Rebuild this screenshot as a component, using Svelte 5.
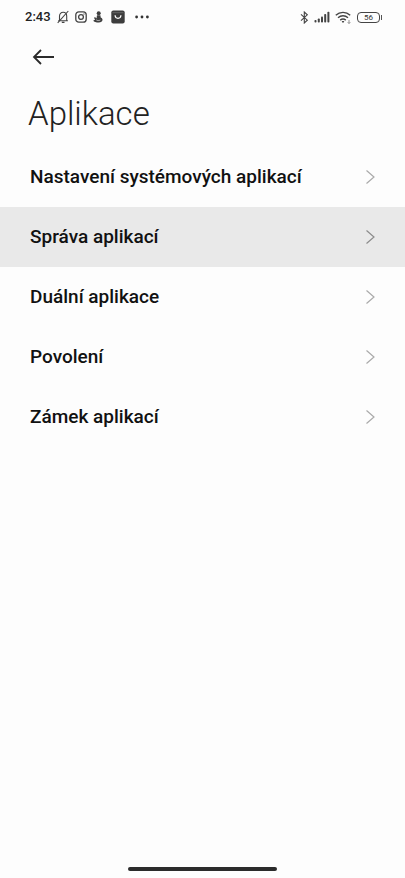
<script lang="ts">
	const items = [
		{ label: "Nastavení systémových aplikací", href: "#system" },
		{ label: "Správa aplikací", href: "#manage", pressed: true },
		{ label: "Duální aplikace", href: "#dual" },
		{ label: "Povolení", href: "#permissions" },
		{ label: "Zámek aplikací", href: "#lock" }
	];
	const battery = 56;
</script>

<div class="screen">
	<div class="status-bar">
		<div class="group">
			<span class="time">2:43</span>
			<svg width="12" height="14" viewBox="0 0 12 14" fill="none" stroke="#444" stroke-width="1.1">
				<path d="M1.2 10.7h9.7M2.5 10.5V6.2C2.5 3.8 4 2.2 6.2 2.2S9.7 3.8 9.7 6.2v4.3M4.8 12.4h2.7" />
				<path d="M11.3 1 .7 12.8" />
			</svg>
			<svg width="12" height="12" viewBox="0 0 12 12" fill="none" stroke="#444" stroke-width="1.3">
				<rect x=".8" y=".8" width="10.4" height="10.4" rx="3" />
				<circle cx="6" cy="6" r="2.4" />
				<circle cx="9" cy="3" r=".4" fill="#444" stroke-width=".4" />
			</svg>
			<svg width="10" height="12" viewBox="0 0 10 12" fill="#3f3f3f">
				<circle cx="5.7" cy="2.2" r="2" />
				<path d="M4 4.2h3.4l.3 2.2c1.5.5 2 1.6 1.8 2.7-.2 1.5-1.5 2.5-3.7 2.5C3.3 11.6.6 11 .4 9.8c-.1-.8.9-1 1.8-.8C1.4 8.2 1 7 1.4 6.3c.8-.3 1.5.4 2.1 1.2z" />
				<path d="M3.2 8.8c1.2 1 2.7 1 4.2.2" fill="none" stroke="#fff" stroke-width=".6" />
			</svg>
			<svg class="store" width="14" height="14" viewBox="0 0 14 14">
				<rect x=".3" y=".5" width="13.4" height="13" rx="2" fill="#3d3d3d" />
				<path d="M1.5 2.7h11" stroke="#777" stroke-width=".7" />
				<path d="M4.1 5.5c.3 3.7 5.5 3.7 5.8 0" fill="none" stroke="#fff" stroke-width="1.2" stroke-linecap="round" />
			</svg>
			<svg class="more" width="14" height="4" viewBox="0 0 14 4" fill="#333">
				<circle cx="1.6" cy="2" r="1.4" />
				<circle cx="7" cy="2" r="1.4" />
				<circle cx="12.4" cy="2" r="1.4" />
			</svg>
		</div>
		<div class="group right">
			<svg width="9" height="13" viewBox="0 0 9 13" fill="none" stroke="#444" stroke-width="1.1">
				<path d="m1 3.4 6.3 5.8-3 2.8V1l3 2.8L1 9.6" />
			</svg>
			<svg width="16" height="12" viewBox="0 0 16 12" fill="#444">
				<rect x=".5" y="9" width="2" height="2.5" rx=".8" />
				<rect x="3.8" y="7.5" width="2" height="4" rx=".8" />
				<rect x="7" y="5.5" width="2" height="6" rx=".8" />
				<rect x="10.2" y="3" width="2" height="8.5" rx=".8" />
				<rect x="13.4" y=".7" width="2" height="10.8" rx=".8" />
			</svg>
			<svg width="17" height="13" viewBox="0 0 17 13" fill="none" stroke="#444" stroke-width="1.4">
				<path d="M.8 4.2c4.1-3.8 10.3-3.8 14.4 0M3 6.7c2.9-2.6 7.1-2.6 10 0M5.2 9.1c1.7-1.4 3.9-1.4 5.6 0" />
				<path d="M6.7 10.5c.9-.6 1.7-.6 2.6 0L8 12z" fill="#444" stroke="none" />
				<path d="M14 9v3.5M12.7 11.2 14 12.5l1.3-1.3" stroke="#777" stroke-width=".8" />
			</svg>
			<span class="battery">{battery}</span>
		</div>
	</div>

	<header>
		<button class="back" aria-label="Zpět">
			<svg width="24" height="18" viewBox="0 0 24 18" fill="none" stroke="#2b2b2b" stroke-width="1.8">
				<path d="M23 9H3M10 2 3 9l7 7" />
			</svg>
		</button>
		<h1>Aplikace</h1>
	</header>

	<nav>
		{#each items as item}
			<a href={item.href} class:pressed={item.pressed}>
				<span>{item.label}</span>
				<svg width="10" height="16" viewBox="0 0 10 16" fill="none" stroke="currentColor" stroke-width="1.2">
					<path d="m1.5 1.5 7.5 6.5-7.5 6.5" />
				</svg>
			</a>
		{/each}
	</nav>

	<div class="home-bar"></div>
</div>

<style>
	:global(body) {
		margin: 0;
		background: #fdfdfd;
	}

	.screen {
		display: flex;
		flex-direction: column;
		min-height: 100vh;
		box-sizing: border-box;
		padding-bottom: 7px;
		font-family: Roboto, "Noto Sans", sans-serif;
		color: #111;
	}

	svg {
		display: block;
		flex-shrink: 0;
	}

	.status-bar {
		display: flex;
		align-items: center;
		justify-content: space-between;
		height: 34px;
		padding: 0 22px 0 25px;
	}

	.group {
		display: flex;
		align-items: center;
		gap: 6px;
	}

	.group.right {
		gap: 5px;
	}

	.time {
		font-size: 13px;
		font-weight: 500;
		line-height: 16px;
		color: #222;
	}

	.store {
		margin-left: 2px;
	}

	.more {
		margin-left: 4px;
	}

	.battery {
		position: relative;
		box-sizing: border-box;
		width: 23px;
		height: 11px;
		margin-right: 3px;
		border: 1px solid #444;
		border-radius: 4px;
		font-size: 8px;
		line-height: 9px;
		text-align: center;
		color: #333;
	}

	.battery::after {
		content: "";
		position: absolute;
		top: 2px;
		right: -3px;
		width: 1px;
		height: 5px;
		background: #555;
	}

	header {
		padding: 11px 28px 0;
	}

	.back {
		display: block;
		margin: 0;
		padding: 3px;
		border: 0;
		background: none;
	}

	h1 {
		margin: 23px 0 11px;
		font-size: 33px;
		font-weight: 300;
		line-height: 44px;
		color: #222;
	}

	nav a {
		display: flex;
		align-items: center;
		justify-content: space-between;
		height: 60px;
		padding: 0 30px;
		font-size: 19px;
		font-weight: 500;
		line-height: 24px;
		color: inherit;
		text-decoration: none;
	}

	nav a.pressed {
		background: #e9e9e9;
	}

	nav svg {
		color: #aaa;
	}

	nav a.pressed svg {
		color: #8c8c8c;
	}

	.home-bar {
		width: 37%;
		height: 4px;
		margin: auto auto 0;
		border-radius: 2px;
		background: #2b2b2b;
	}
</style>
